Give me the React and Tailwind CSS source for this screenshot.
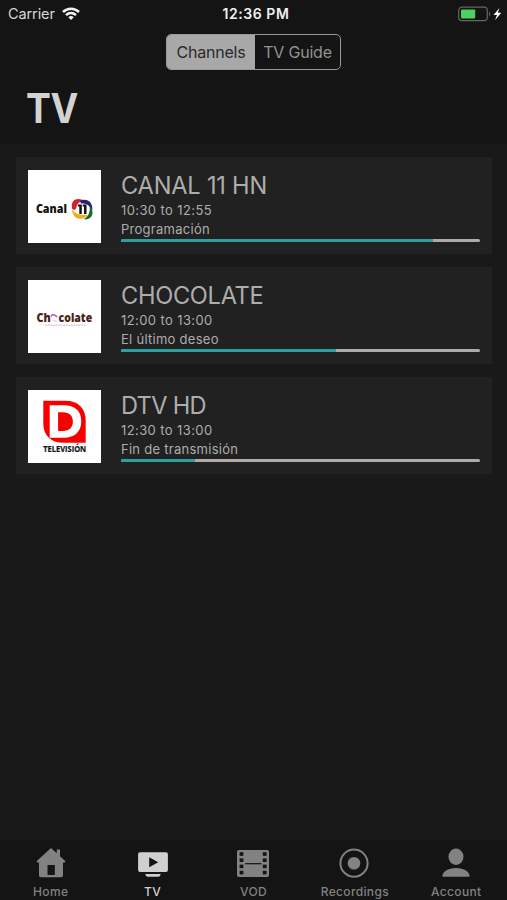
import React, { useState } from 'react'

function CanalLogo(){
  return (
    <svg viewBox="0 0 74 74" className="w-full h-full">
      <text x="8" y="44" fontFamily="'Open Sans', sans-serif" fontWeight="800" fontSize="12.5" textLength="31.5" lengthAdjust="spacingAndGlyphs" fill="#111">Canal</text>
      <path d="M44.5 38 C43.5 30 50 27 58 31.5 C53 31.5 49.5 33.5 49 38.5 C48 41 44.8 41 44.5 38 Z" fill="#cf2230" />
      <path d="M53 31 C60 28 66.5 33 65 41.5 C63 36 59 33.5 53.5 34 Z" fill="#252377" />
      <path d="M62.5 36.5 C68 42 65.5 51.5 56.5 50 C61 47.5 63.3 43 62.5 36.5 Z" fill="#14692b" />
      <path d="M44.5 40 C48 44.5 53 46 60.5 45.5 C56 52 45.5 51 44.5 40 Z" fill="#f3ad1c" />
      <path d="M50.5 35 H54.5 V44.5 H52 V37 H50.5 Z M55.5 35 H59.3 V44.5 H56.8 V37 H55.5 Z" fill="#111" />
    </svg>
  )
}

function ChocolateLogo(){
  return (
    <svg viewBox="0 0 74 74" className="w-full h-full">
      <g fontFamily="'Open Sans', sans-serif" fontWeight="800" fontSize="13" fill="#4c2118">
        <text x="8.5" y="42.5" textLength="14.5" lengthAdjust="spacingAndGlyphs">Ch</text>
        <text x="31" y="42.5" textLength="34" lengthAdjust="spacingAndGlyphs">colate</text>
      </g>
      <path d="M23.5 37 C24 34.8 27 34.5 29.5 37.5" fill="none" stroke="#a95bb5" strokeWidth="1.6" />
      <path d="M25 41.5 H29.5" stroke="#cde3f4" strokeWidth="1.5" />
      <path d="M17.5 45.8 H59" stroke="#c9b2a8" strokeWidth=".9" strokeDasharray="2 .6" />
    </svg>
  )
}

function DtvLogo(){
  return (
    <svg viewBox="0 0 74 74" className="w-full h-full">
      <path d="M15.5 11 H38 C51 11 58.5 19 58.5 31 V53.5 H36 C23 53.5 15.5 46 15.5 34 Z" fill="#f90000" />
      <path fillRule="evenodd" d="M22 15.5 H36 C48 15.5 54 21.5 54 31.5 C54 42 48 48.5 36 48.5 H22 Z M30.5 22.5 V41.5 H35.5 C42 41.5 45.5 38 45.5 32 C45.5 26 42 22.5 35.5 22.5 Z" fill="#fff" />
      <text x="15.5" y="62.8" fontFamily="'Open Sans', sans-serif" fontWeight="700" fontSize="8.4" textLength="43.5" lengthAdjust="spacingAndGlyphs" fill="#111" stroke="#111" strokeWidth=".2">TELEVISIÓN</text>
    </svg>
  )
}

function HomeIcon(){
  return (
    <svg viewBox="0 0 30 30" className="w-[30px] h-[30px]" fill="currentColor">
      <path fillRule="evenodd" d="M15 0 L20.8 5.2 V1.5 H24 V8.2 L29.5 13.2 L28 15 L27 14.2 V27.5 Q27 29.2 25.2 29.2 H4.8 Q3 29.2 3 27.5 V14.2 L2 15 L.5 13.2 Z M11.5 17 V27 H18.8 V17 Z" />
    </svg>
  )
}

function TvIcon(){
  return (
    <svg viewBox="0 0 30 30" className="w-[30px] h-[30px]" fill="currentColor">
      <path fillRule="evenodd" d="M2 4.3 H28 Q29.9 4.3 29.9 6.3 V22 Q29.9 24 28 24 H2 Q.1 24 .1 22 V6.3 Q.1 4.3 2 4.3 Z M11.2 9.2 V19.3 L20.2 14.3 Z" />
      <path d="M7.3 26 H22.7 Q22.3 28.8 20.5 28.8 H9.5 Q7.7 28.8 7.3 26 Z" />
    </svg>
  )
}

function VodIcon(){
  return (
    <svg viewBox="0 0 32 30" className="w-8 h-[30px]">
      <rect x="0" y="2" width="32" height="27" rx="2" fill="currentColor" />
      {[4.2, 10.4, 16.6, 22.8].map(y=> (
        <g key={y} fill="#141414">
          <rect x="2.6" y={y} width="3.8" height="3.6" />
          <rect x="25.8" y={y} width="3.8" height="3.6" />
        </g>
      ))}
      <path d="M8 15.7 H24.5" stroke="#141414" strokeWidth="1.2" />
    </svg>
  )
}

function RecIcon(){
  return (
    <svg viewBox="0 0 30 30" className="w-[30px] h-[30px] mr-px">
      <circle cx="15" cy="15.2" r="13.6" fill="none" stroke="currentColor" strokeWidth="2" />
      <circle cx="15" cy="15.2" r="6.3" fill="currentColor" />
    </svg>
  )
}

function AccountIcon(){
  return (
    <svg viewBox="0 0 30 30" className="w-[30px] h-[30px]" fill="currentColor">
      <ellipse cx="15" cy="8.8" rx="7.5" ry="8.2" />
      <path d="M1.5 28.7 C1 23.5 7 20 15 20 C23 20 29 23.5 28.5 28.7 Z" />
    </svg>
  )
}

function StatusBar(){
  return (
    <div className="grid grid-cols-3 items-center h-[27px] pl-2 pr-[5px] text-[14.5px]">
      <div className="flex items-center gap-[7px] text-[#d6d6d6]">
        <span className="w-[47px] tracking-[-0.1px]">Carrier</span>
        <svg viewBox="0 0 18 13" className="w-[18px] h-[13px]" fill="none" stroke="#f2f2f2" strokeWidth="2.5">
          <path d="M1 5 C5.5 .6 12.5 .6 17 5" />
          <path d="M4 8.2 C7 5.4 11 5.4 14 8.2" />
          <path d="M6.3 10.2 Q9 8 11.7 10.2 L9 13 Z" fill="#f2f2f2" stroke="none" />
        </svg>
      </div>
      <div className="pl-[2px] text-center font-semibold text-[14px] tracking-[0.55px] text-[#f0f0f0] whitespace-nowrap">12:36 PM</div>
      <div className="flex justify-end">
        <svg viewBox="0 0 44 16" className="w-11 h-4">
          <rect x=".7" y="1.2" width="28.6" height="13.4" rx="3.2" fill="none" stroke="#656565" strokeWidth="1.2" />
          <rect x="3" y="3.4" width="14.2" height="9" rx="1" fill="#4cd35f" />
          <path d="M31 5.5 Q33.6 8 31 10.5 Z" fill="#656565" />
          <path d="M41.5 2 L35.5 9 H39 L37 14.2 L43.3 6.8 H39.8 Z" fill="#fff" />
        </svg>
      </div>
    </div>
  )
}

const channels = [
  { name: 'CANAL 11 HN', time: '10:30 to 12:55', show: 'Programación', progress: 87, Logo: CanalLogo, nameClass: 'tracking-[-0.2px]' },
  { name: 'CHOCOLATE', time: '12:00 to 13:00', show: 'El último deseo', progress: 60, Logo: ChocolateLogo, nameClass: 'tracking-[-0.3px]' },
  { name: 'DTV HD', time: '12:30 to 13:00', show: 'Fin de transmisión', progress: 20.5, Logo: DtvLogo, nameClass: 'tracking-[-0.7px]' }
]

const tabs = [
  { label: 'Home', Icon: HomeIcon },
  { label: 'TV', Icon: TvIcon },
  { label: 'VOD', Icon: VodIcon },
  { label: 'Recordings', Icon: RecIcon },
  { label: 'Account', Icon: AccountIcon }
]

function ChannelCard({ channel }){
  const { name, time, show, progress, Logo, nameClass } = channel
  return (
    <div className="flex h-[97px] bg-[#212121] pl-3 pr-3 pt-[12.5px]">
      <div className="w-[73px] h-[73px] bg-white shrink-0">
        <Logo />
      </div>
      <div className="ml-5 flex-1 text-[#adadad]">
        <div className={`text-[23.6px] leading-[30px] pt-px font-normal ${nameClass}`}>{name}</div>
        <div className="text-[13px] leading-[19px] tracking-[0.4px]">{time}</div>
        <div className="text-[13px] leading-[19px] tracking-[0.27px]">{show}</div>
        <div className="h-[3px] rounded-full bg-[#afa9aa] overflow-hidden">
          <div className="h-full bg-[#2c9f9f]" style={{ width: `${progress}%` }} />
        </div>
      </div>
    </div>
  )
}

export default function App(){
  const [view, setView] = useState('Channels')
  const [tab, setTab] = useState('TV')

  return (
    <div className="flex flex-col w-full h-[900px] bg-[#191919] font-['Inter',sans-serif] overflow-hidden">
      <header className="h-[144px] bg-[#141414] shrink-0">
        <StatusBar />
        <div className="flex w-[175px] h-9 mt-[7px] ml-[166px] border border-[#999] rounded-[5px] overflow-hidden text-[16px] tracking-[-0.2px]">
          {['Channels', 'TV Guide'].map(v=> (
            <button
              key={v}
              onClick={()=>setView(v)}
              className={v === view ? 'w-[88px] bg-[#a8a8a8] text-[#2a2a2a]' : 'flex-1 text-[#929292]'}
            >
              {v}
            </button>
          ))}
        </div>
        <h1 className="inline-block origin-left scale-x-[0.92] ml-[26px] mt-[15px] text-[40.5px] leading-[48px] font-bold tracking-[-0.5px] text-[#d2d2d2]">TV</h1>
      </header>

      <main className="flex-1 flex flex-col gap-[13px] pl-4 pr-[15px] pt-[13px]">
        {channels.map(c=> <ChannelCard key={c.name} channel={c} />)}
      </main>

      <nav className="grid grid-cols-5 h-[60px] bg-[#141414] shrink-0">
        {tabs.map(({ label, Icon })=> (
          <button
            key={label}
            onClick={()=>setTab(label)}
            className={`flex flex-col items-center pt-2 ${label === tab ? 'pl-px text-[#d0d0d0]' : 'text-[#828282]'}`}
          >
            <Icon />
            <span className="text-[12px] leading-4 mt-[6px] font-medium tracking-[0.35px]">{label}</span>
          </button>
        ))}
      </nav>
    </div>
  )
}
